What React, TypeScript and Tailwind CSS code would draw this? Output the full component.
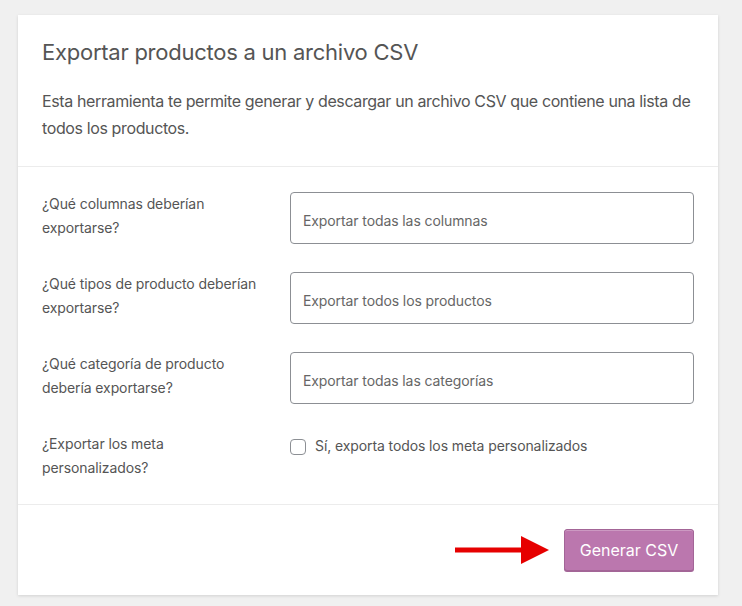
const rows = [
  { label: '¿Qué columnas deberían exportarse?', value: 'Exportar todas las columnas' },
  { label: '¿Qué tipos de producto deberían exportarse?', value: 'Exportar todos los productos' },
  { label: '¿Qué categoría de producto debería exportarse?', value: 'Exportar todas las categorías' },
];

export default function App() {
  return (
    <div
      className="min-h-[606px] bg-[#f0f0f0] pt-[15px] pb-[12px] pl-[18px]"
      style={{ fontFamily: 'Inter, "Noto Sans", sans-serif' }}
    >
      <div className="w-[700px] bg-white shadow-[0_1px_3px_rgba(0,0,0,0.13)]">
        <header className="px-6 pt-[23px] pb-6 border-b border-[#ececec]">
          <h2 className="text-[22px] leading-[28px] tracking-[-0.25px] text-[#555] font-normal mb-[22px]">
            Exportar productos a un archivo CSV
          </h2>
          <p className="text-[16px] leading-[27px] tracking-[-0.38px] text-[#555]">
            Esta herramienta te permite generar y descargar un archivo CSV que contiene una lista de todos los productos.
          </p>
        </header>

        <section className="px-6 pt-[25px] pb-6 border-b border-[#ececec] flex flex-col gap-[28px]">
          {rows.map((r) => (
            <div key={r.value} className="flex gap-6">
              <div className="w-[224px] text-[14px] leading-[24px] tracking-[-0.1px] text-[#555]">{r.label}</div>
              <div className="flex-1 h-[52px] border border-[#8c8f94] rounded-[4px] flex items-center px-3 pt-[5px] text-[14px] tracking-[-0.1px] text-[#666]">
                {r.value}
              </div>
            </div>
          ))}
          <div className="flex gap-6">
            <div className="w-[224px] text-[14px] leading-[24px] tracking-[-0.1px] text-[#555]">¿Exportar los meta personalizados?</div>
            <label className="flex-1 flex items-start gap-[9px] pt-[2px] text-[14px] leading-[24px] tracking-[-0.1px] text-[#555]">
              <span className="mt-[5px] w-4 h-4 rounded-[4px] border border-[#8c8f94] bg-white shrink-0" />
              Sí, exporta todos los meta personalizados
            </label>
          </div>
        </section>

        <footer className="px-6 py-6 flex items-center justify-end gap-[15px]">
          <svg width="94" height="28" viewBox="0 0 94 28">
            <rect x="0" y="11.5" width="68" height="5" fill="#e60000" />
            <polygon points="66,0 94,14 66,28" fill="#e60000" />
          </svg>
          <button className="w-[130px] h-[42px] rounded-[3px] bg-[#bb77ae] border border-[#a36597] text-white text-[16px] shadow-[inset_0_1px_0_rgba(255,255,255,0.25),0_1px_0_#a36597]">
            Generar CSV
          </button>
        </footer>
      </div>
    </div>
  );
}
